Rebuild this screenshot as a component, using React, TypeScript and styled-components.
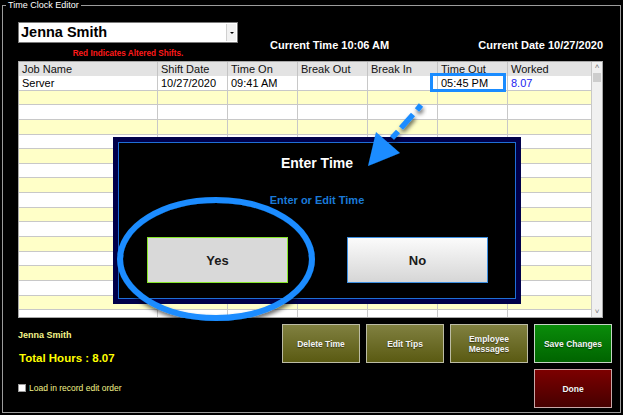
import React from 'react';
import styled, { createGlobalStyle } from 'styled-components';

const GlobalStyle = createGlobalStyle`
  html, body {
    margin: 0;
    padding: 0;
    background: #000;
  }
  * {
    box-sizing: border-box;
  }
  body {
    font-family: "Liberation Sans", Arial, sans-serif;
  }
`;

const columns = ['Job Name', 'Shift Date', 'Time On', 'Break Out', 'Break In', 'Time Out', 'Worked'];

const shifts = [
  { job: 'Server', date: '10/27/2020', on: '09:41 AM', bOut: '', bIn: '', out: '05:45 PM', worked: '8.07' },
];

const EMPTY_ROWS = 16;

const App = () => {
  const rows = [
    ...shifts,
    ...Array.from({ length: EMPTY_ROWS }, () => null),
  ];

  return (
    <Page>
      <GlobalStyle />
      <Frame>
        <Legend>Time Clock Editor</Legend>
        <Header>
          <LeftCol>
            <Select>
              <SelectText>Jenna Smith</SelectText>
              <SelectArrow>
                <Caret />
              </SelectArrow>
            </Select>
            <RedNote>Red Indicates Altered Shifts.</RedNote>
          </LeftCol>
          <RightCol>
            <InfoText>Current Time 10:06 AM</InfoText>
            <InfoText>Current Date 10/27/2020</InfoText>
          </RightCol>
        </Header>

        <Table>
          <GridArea>
            <HeaderRow>
              {columns.map((c) => (
                <HeadCell key={c}>{c}</HeadCell>
              ))}
            </HeaderRow>
            {rows.map((r, i) => (
              <Row key={i} $alt={i % 2 === 1}>
                <Cell>{r?.job}</Cell>
                <Cell>{r?.date}</Cell>
                <Cell>{r?.on}</Cell>
                <Cell>{r?.bOut}</Cell>
                <Cell>{r?.bIn}</Cell>
                <Cell>{r?.out}</Cell>
                <Cell $blue>{r?.worked}</Cell>
              </Row>
            ))}
          </GridArea>
          <ScrollBar>
            <ScrollArrow>˄</ScrollArrow>
            <Thumb />
            <ScrollSpacer />
            <ScrollArrow>˅</ScrollArrow>
          </ScrollBar>
        </Table>

        <BottomArea>
          <InfoCol>
            <EmpName>Jenna Smith</EmpName>
            <TotalHours>Total Hours : 8.07</TotalHours>
            <CheckRow>
              <CheckBox />
              <CheckLabel>Load in record edit order</CheckLabel>
            </CheckRow>
          </InfoCol>
          <ButtonGrid>
            <ActionButton $tone="olive">Delete Time</ActionButton>
            <ActionButton $tone="olive">Edit Tips</ActionButton>
            <ActionButton $tone="olive">
              Employee
              <br />
              Messages
            </ActionButton>
            <ActionButton $tone="green">Save Changes</ActionButton>
            <ActionButton $tone="red" $col={4}>
              Done
            </ActionButton>
          </ButtonGrid>
        </BottomArea>
      </Frame>

      <Modal>
        <ModalInner>
          <ModalTitle>Enter Time</ModalTitle>
          <ModalSub>Enter or Edit Time</ModalSub>
          <ModalButtons>
            <DialogButton $variant="yes">Yes</DialogButton>
            <DialogButton $variant="no">No</DialogButton>
          </ModalButtons>
        </ModalInner>
      </Modal>

      <Annotations viewBox="0 0 623 415" width="623" height="415">
        <defs>
          <filter id="shadow" x="-20%" y="-20%" width="140%" height="140%">
            <feDropShadow dx="1" dy="3" stdDeviation="2" floodColor="#000" floodOpacity="0.6" />
          </filter>
        </defs>
        <rect x="431.5" y="74.5" width="73" height="16" fill="none" stroke="#1a8cff" strokeWidth="3" />
        <ellipse cx="216" cy="259" rx="96" ry="59" fill="none" stroke="#1a8cff" strokeWidth="6" filter="url(#shadow)" />
        <g stroke="#1a8cff" strokeWidth="5.5" filter="url(#shadow)">
          <line x1="421" y1="105" x2="417" y2="110" />
          <line x1="413" y1="114.5" x2="401" y2="128" />
          <line x1="398" y1="131.5" x2="392" y2="138" />
        </g>
        <polygon points="368,166 376,132 400,153" fill="#1a8cff" filter="url(#shadow)" />
      </Annotations>
    </Page>
  );
};

export default App;

const Page = styled.div`
  position: relative;
  width: 623px;
  height: 415px;
  background: #000;
  overflow: hidden;
`;

const Frame = styled.div`
  position: relative;
  margin: 5px 2px 0 2px;
  height: 408px;
  border: 1px solid #9c9c9c;
`;

const Legend = styled.div`
  position: absolute;
  top: -7px;
  left: 3px;
  padding: 0 2px;
  background: #000;
  color: #fff;
  font-size: 9px;
  line-height: 12px;
`;

const Header = styled.div`
  display: flex;
  height: 55px;
  padding: 16px 17px 0 15px;
`;

const LeftCol = styled.div`
  display: flex;
  flex-direction: column;
  width: 220px;
`;

const Select = styled.div`
  display: flex;
  align-items: center;
  height: 21px;
  background: #fff;
  border: 1px solid #7a7a7a;
`;

const SelectText = styled.div`
  flex: 1;
  padding-left: 2px;
  color: #000;
  font-weight: bold;
  font-size: 14.5px;
  line-height: 19px;
`;

const SelectArrow = styled.div`
  display: flex;
  align-items: center;
  justify-content: center;
  width: 10px;
  height: 17px;
  margin-right: 1px;
  background: #f2f2f2;
  border-left: 1px solid #d0d0d0;
`;

const Caret = styled.div`
  width: 0;
  height: 0;
  border-left: 2px solid transparent;
  border-right: 2px solid transparent;
  border-top: 2px solid #000;
`;

const RedNote = styled.div`
  margin-top: 7px;
  color: #ff1a1a;
  font-weight: bold;
  font-size: 8.2px;
  line-height: 8px;
  text-align: center;
`;

const RightCol = styled.div`
  display: flex;
  flex: 1;
  justify-content: space-between;
  margin-left: 32px;
  padding-top: 17px;
`;

const InfoText = styled.div`
  color: #fff;
  font-weight: bold;
  font-size: 11px;
  line-height: 12px;
`;

const Table = styled.div`
  display: flex;
  height: 257px;
  margin: 0 17px 0 15px;
  background: #fff;
  border: 1px solid #a8a8a8;
  overflow: hidden;
`;

const GridArea = styled.div`
  width: 573px;
`;

const gridCols = '139px 70px 70px 70px 70px 70px 84px';

const HeaderRow = styled.div`
  display: grid;
  grid-template-columns: ${gridCols};
  height: 14px;
  background: #e3e3e3;
`;

const HeadCell = styled.div`
  padding-left: 3px;
  border-right: 1px solid #c4c4c4;
  color: #111;
  font-size: 11px;
  line-height: 14px;
  white-space: nowrap;
`;

const Row = styled.div<{ $alt: boolean }>`
  display: grid;
  grid-template-columns: ${gridCols};
  height: 14.65px;
  background: ${({ $alt }) => ($alt ? '#ffffc8' : '#fff')};
  border-bottom: 1px solid #c8c8c8;
`;

const Cell = styled.div<{ $blue?: boolean }>`
  padding-left: 3px;
  border-right: 1px solid #c8c8c8;
  color: ${({ $blue }) => ($blue ? '#1c1cf0' : '#000')};
  font-size: 11px;
  line-height: 14px;
  white-space: nowrap;
`;

const ScrollBar = styled.div`
  display: flex;
  flex-direction: column;
  width: 10px;
  background: #f0f0f0;
`;

const ScrollArrow = styled.div`
  height: 10px;
  color: #777;
  font-size: 8px;
  line-height: 10px;
  text-align: center;
`;

const Thumb = styled.div`
  height: 9px;
  margin: 1px 1px 0;
  background: #cdcdcd;
`;

const ScrollSpacer = styled.div`
  flex: 1;
`;

const BottomArea = styled.div`
  display: flex;
  justify-content: space-between;
  padding: 6px 8px 0 15px;
`;

const InfoCol = styled.div`
  display: flex;
  flex-direction: column;
  padding-top: 5px;
`;

const EmpName = styled.div`
  color: #f4f48a;
  font-weight: bold;
  font-size: 9px;
  line-height: 12px;
`;

const TotalHours = styled.div`
  margin-top: 10px;
  padding-left: 1px;
  color: #ffff00;
  font-weight: bold;
  font-size: 11.5px;
  line-height: 14px;
`;

const CheckRow = styled.div`
  display: flex;
  align-items: center;
  gap: 3px;
  margin-top: 18px;
`;

const CheckBox = styled.div`
  width: 8px;
  height: 8px;
  background: #fff;
  border: 1px solid #9a9a9a;
`;

const CheckLabel = styled.div`
  color: #f4f48a;
  font-size: 8.5px;
  line-height: 10px;
`;

const ButtonGrid = styled.div`
  display: grid;
  grid-template-columns: repeat(4, 78px);
  grid-auto-rows: 39px;
  gap: 6px;
`;

const tones = {
  olive: { top: '#808040', bottom: '#5a5a12', border: '#bcbca4' },
  green: { top: '#0a8c0a', bottom: '#006400', border: '#c4d4c4' },
  red: { top: '#7c0000', bottom: '#460000', border: '#c8a8a8' },
};

const ActionButton = styled.div<{ $tone: keyof typeof tones; $col?: number }>`
  display: flex;
  align-items: center;
  justify-content: center;
  grid-column: ${({ $col }) => $col ?? 'auto'};
  background: linear-gradient(
    ${({ $tone }) => tones[$tone].top},
    ${({ $tone }) => tones[$tone].bottom}
  );
  border: 1px solid ${({ $tone }) => tones[$tone].border};
  color: #f4f4f4;
  font-weight: bold;
  font-size: 8.5px;
  line-height: 10px;
  text-align: center;
  text-shadow: 0 1px 1px rgba(0, 0, 0, 0.5);
`;

const Modal = styled.div`
  position: absolute;
  left: 113px;
  top: 137px;
  width: 408px;
  height: 167px;
  padding: 5px;
  background: #00004a;
`;

const ModalInner = styled.div`
  display: flex;
  flex-direction: column;
  align-items: center;
  height: 100%;
  padding-top: 12px;
  background: #000;
  border: 1px solid #1f6fd6;
`;

const ModalTitle = styled.div`
  color: #fff;
  font-weight: bold;
  font-size: 14px;
  line-height: 16px;
`;

const ModalSub = styled.div`
  margin-top: 22px;
  color: #1a7ad8;
  font-weight: bold;
  font-size: 11px;
  line-height: 14px;
`;

const ModalButtons = styled.div`
  display: flex;
  justify-content: space-between;
  align-self: stretch;
  margin-top: 30px;
  padding: 0 27px 0 28px;
`;

const DialogButton = styled.div<{ $variant: 'yes' | 'no' }>`
  display: flex;
  align-items: center;
  justify-content: center;
  width: 141px;
  height: 46px;
  background: ${({ $variant }) =>
    $variant === 'yes' ? '#d9d9d9' : 'linear-gradient(#fbfbfb, #d6d6d6)'};
  border: 1px solid ${({ $variant }) => ($variant === 'yes' ? '#86e62a' : '#3d8fe0')};
  color: #1a1a1a;
  font-weight: bold;
  font-size: 13px;
`;

const Annotations = styled.svg`
  position: absolute;
  left: 0;
  top: 0;
  pointer-events: none;
`;
